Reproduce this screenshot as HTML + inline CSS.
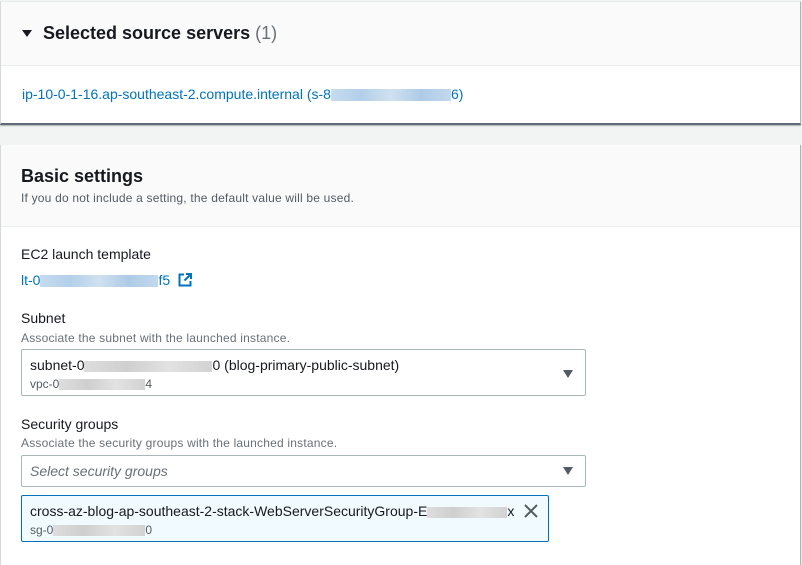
<!DOCTYPE html>
<html><head><style>
*{margin:0;padding:0;box-sizing:border-box}
body{width:802px;height:563px;overflow:hidden;background:#f2f3f3;font-family:"Liberation Sans",Arial,sans-serif;color:#16191f;position:relative}
.c{position:absolute;left:0;width:801px;background:#fff;border-left:1px solid #d5dbdb;border-right:1px solid #aab7b8}
.h{background:#fafafa;border-bottom:1px solid #eaeded}
.blur{display:inline-block;vertical-align:middle;height:12px;background:linear-gradient(90deg,#c6dcef,#b3cfe9,#cfe1f1,#aecbe6,#c2d9ee)}
.gb{display:inline-block;vertical-align:middle;height:11px;background:linear-gradient(90deg,#ddd,#cfcfcf,#e2e2e2,#d2d2d2)}
.lbl{font-size:14px;position:absolute;left:21px}
.desc{font-size:12px;letter-spacing:0.2px;color:#687078;position:absolute;left:21px}
.a{color:#0073bb}
.sel{position:absolute;left:21px;border:1px solid #aab7b8;border-radius:2px;background:#fff}
.tri{position:absolute;right:12px;width:0;height:0;border-left:5.5px solid transparent;border-right:5.5px solid transparent;border-top:8px solid #545b64}
</style></head><body>
<div class="c" style="top:1px;height:124px;border-top:1px solid #eaeded;border-bottom:2px solid #5f6b7a;box-shadow:0 1px 1px rgba(0,28,36,.3)">
 <div class="h" style="height:64px;position:relative">
  <div style="position:absolute;left:21px;top:28px;width:0;height:0;border-left:5px solid transparent;border-right:5px solid transparent;border-top:7px solid #16191f"></div>
  <div style="position:absolute;left:42px;top:21px;font-size:18px;font-weight:bold">Selected source servers <span style="font-weight:normal;color:#687078">(1)</span></div>
 </div>
 <div style="position:absolute;left:21px;top:84px;font-size:14px" class="a">ip-10-0-1-16.ap-southeast-2.compute.internal (s-8<span class="blur" style="width:120px"></span>6)</div>
</div>
<div class="c" style="top:145px;height:420px;box-shadow:0 1px 1px rgba(0,28,36,.3)">
 <div class="h" style="height:82px;position:relative">
  <div style="position:absolute;left:20px;top:21px;font-size:18px;font-weight:bold">Basic settings</div>
  <div style="position:absolute;left:20px;top:46px;font-size:12px;letter-spacing:0.2px;color:#545b64">If you do not include a setting, the default value will be used.</div>
 </div>
</div>
<div class="lbl" style="top:246px">EC2 launch template</div>
<div class="a" style="position:absolute;left:21px;top:272px;font-size:14px">lt-0<span class="blur" style="width:118px"></span>f5
 <svg width="14" height="14" viewBox="0 0 14 14" style="vertical-align:-2px;margin-left:4px"><path d="M6 1.5H1.5v11h11V8" fill="none" stroke="#0073bb" stroke-width="2"/><path d="M8 1h5v5M13 1L6.5 7.5" fill="none" stroke="#0073bb" stroke-width="2"/></svg></div>
<div class="lbl" style="top:310px">Subnet</div>
<div class="desc" style="top:331px">Associate the subnet with the launched instance.</div>
<div class="sel" style="top:349px;width:565px;height:47px">
 <div style="position:absolute;left:8px;top:7px;font-size:14px">subnet-0<span class="gb" style="width:128px"></span>0 (blog-primary-public-subnet)</div>
 <div style="position:absolute;left:8px;top:27px;font-size:12px;color:#545b64">vpc-0<span class="gb" style="width:86px"></span>4</div>
 <div class="tri" style="top:20px"></div>
</div>
<div class="lbl" style="top:416px">Security groups</div>
<div class="desc" style="top:436px">Associate the security groups with the launched instance.</div>
<div class="sel" style="top:455px;width:565px;height:32px">
 <div style="position:absolute;left:8px;top:7px;font-size:14px;font-style:italic;color:#687078">Select security groups</div>
 <div class="tri" style="top:11px"></div>
</div>
<div style="position:absolute;left:21px;top:495px;width:528px;height:47px;border:1px solid #0073bb;border-radius:2px;background:#f1faff">
 <div style="position:absolute;left:8px;top:7px;font-size:14px">cross-az-blog-ap-southeast-2-stack-WebServerSecurityGroup-E<span class="gb" style="width:80px"></span>x</div>
 <div style="position:absolute;left:8px;top:27px;font-size:12px;color:#545b64">sg-0<span class="gb" style="width:92px"></span>0</div>
 <svg width="14" height="14" viewBox="0 0 14 14" style="position:absolute;right:10px;top:8px"><path d="M1 1L13 13M13 1L1 13" stroke="#545b64" stroke-width="2"/></svg>
</div>
</body></html>
